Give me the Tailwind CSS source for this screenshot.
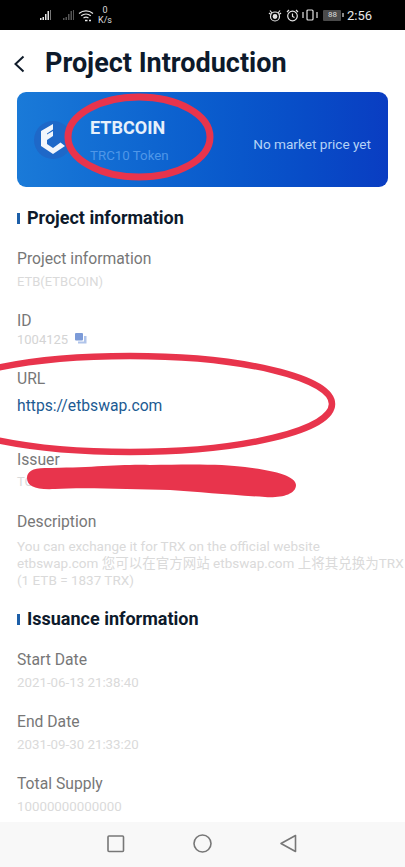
<!DOCTYPE html>
<html lang="en">
<head>
  <meta charset="UTF-8">
  <title>Project Introduction</title>
  <meta name="viewport" content="width=device-width, initial-scale=1" />
  <script src="https://cdn.jsdelivr.net/npm/@tailwindcss/browser@4"></script>
</head>
<body class="bg-white font-['Roboto','Noto_Sans_CJK_SC',sans-serif]">
<div class="relative w-[405px] h-[867px] overflow-hidden flex flex-col">

  <!-- status bar -->
  <div class="h-[30px] shrink-0 bg-black flex items-center justify-between text-white">
    <div class="ml-[40px] flex items-center">
      <svg width="12" height="12" viewBox="0 0 12 12" fill="#e5e5e5"><rect x="0" y="9" width="1.500" height="2"/><rect x="2.500" y="8" width="1.500" height="3"/><rect x="5" y="5" width="1.500" height="6"/><rect x="7.500" y="2" width="1.500" height="9"/><rect x="10" y="1" width="1" height="10" fill="#777"/></svg>
      <svg class="ml-[11px]" width="12" height="12" viewBox="0 0 12 12" fill="#555"><rect x="0" y="9" width="1.500" height="2"/><rect x="2.500" y="8" width="1.500" height="3"/><rect x="5" y="5" width="1.500" height="6"/><rect x="7.500" y="2" width="1.500" height="9"/><rect x="10" y="1" width="1" height="10"/></svg>
      <svg class="ml-[3px]" width="16" height="13" viewBox="0 0 16 13" fill="none" stroke="#e5e5e5" stroke-width="1.200"><path d="M1 4.500C5 1 11 1 15 4.500"/><path d="M3.200 6.800C6 4.500 10 4.500 12.800 6.800"/><path d="M5.500 9C7 8 9 8 10.500 9"/><path d="M7 11.500h2.500M11 11.500h2" stroke-width="1.600"/></svg>
      <div class="ml-[4px] flex flex-col items-center text-[9px] leading-[10px] text-[#ddd]"><span>0</span><span>K/s</span></div>
    </div>
    <div class="mr-[33px] flex items-center">
      <svg width="14" height="13" viewBox="0 0 14 13" fill="none" stroke="#e5e5e5" stroke-width="1.200"><path d="M1 4c1 1 1.500 1 2 1.500M13 4c-1 1-1.500 1-2 1.500M2 1.500l2 2.500M12 1.500l-2 2.500"/><circle cx="7" cy="7.500" r="4.500"/><circle cx="7" cy="7.500" r="1.800" fill="#e5e5e5"/></svg>
      <svg class="ml-[4px]" width="13" height="13" viewBox="0 0 13 13" fill="none" stroke="#e5e5e5" stroke-width="1.200"><circle cx="6.500" cy="7" r="4.800"/><path d="M6.500 4.500V7.500L8.500 8.500M1 3L3 1M12 3L10 1"/></svg>
      <svg class="ml-[3px]" width="16" height="12" viewBox="0 0 16 12" fill="none" stroke="#e5e5e5" stroke-width="1.200"><rect x="5" y="1" width="6" height="10" rx="1"/><path d="M1 3v6M15 3v6"/></svg>
      <div class="ml-[5px] w-[18px] h-[11px] bg-[#4a4a4a] rounded-[1px] flex items-center justify-center text-[8px] leading-none text-[#ddd]">88</div>
      <div class="w-[1.500px] h-[4px] ml-[1px] bg-[#888]"></div>
      <span class="ml-[3px] text-[13px] leading-none text-[#e8e8e8]">2:56</span>
    </div>
  </div>

  <!-- header -->
  <div class="h-[62px] shrink-0 flex items-center pt-[5px]">
    <svg class="ml-[13px]" width="12" height="18" viewBox="0 0 12 18" fill="none" stroke="#0f1b2a" stroke-width="2"><path d="M10.500 1.500L2.500 9L10.500 16.500"/></svg>
    <h1 class="ml-[20px] text-[27px] leading-none font-bold text-[#0d1a2b]">Project Introduction</h1>
  </div>

  <!-- token card -->
  <div class="mx-[17px] h-[95px] shrink-0 rounded-[9px] bg-gradient-to-r from-[#1a7ad8] to-[#0a3dc2] flex items-center">
    <div class="ml-[17px] w-[38px] h-[38px] rounded-full bg-[#1e68c8] flex items-center justify-center">
      <svg width="26" height="31" viewBox="0 0 26 31" fill="#f2f6fc"><path d="M13 0L1 7V22L13 30L25 22L20.500 18.500L13 24L7 20V16L13 12V7L7 10.500V9.500L13 5.500Z"/></svg>
    </div>
    <div class="ml-[18px] flex flex-col pt-[3px]">
      <span class="text-[18px] leading-[20px] font-bold text-[#e6f0fb]">ETBCOIN</span>
      <span class="mt-[10px] text-[13.300px] leading-[16px] text-[#4f97e8]">TRC10 Token</span>
    </div>
    <span class="ml-auto mr-[17px] mt-[10px] text-[13.600px] text-[#b6d3f6]">No market price yet</span>
  </div>

  <!-- project information -->
  <div class="mt-[21px] mx-[17px] flex items-center h-[20px]">
    <div class="w-[3px] h-[11px] bg-[#1d5fa8]"></div>
    <h2 class="ml-[7px] text-[18px] leading-none font-bold text-[#0d1a2b]">Project information</h2>
  </div>

  <div class="mt-[20px] ml-[17px] flex flex-col">
    <div class="flex flex-col">
      <span class="text-[15.700px] leading-[22px] text-[#777]">Project information</span>
      <span class="mt-[4px] text-[13px] leading-[16px] text-[#dadada]">ETB(ETBCOIN)</span>
    </div>
    <div class="mt-[20px] flex flex-col">
      <span class="text-[15.700px] leading-[22px] text-[#777]">ID</span>
      <span class="flex items-center text-[13px] leading-[16px] text-[#d4d4d4]">1004125
        <svg class="ml-[7px] -mt-[3px]" width="12" height="11" viewBox="0 0 12 11"><rect x="0" y="0" width="8" height="7.500" rx="1" fill="#7c9bd8"/><path d="M9 3h2.500v7.500H3V8.500h6Z" fill="#b0c4ea"/></svg>
      </span>
    </div>
    <div class="mt-[20px] flex flex-col">
      <span class="text-[15.700px] leading-[22px] text-[#777]">URL</span>
      <span class="mt-[6px] text-[15.700px] leading-[20px] text-[#1c5a92]">https://etbswap.com</span>
    </div>
    <div class="mt-[33px] flex flex-col">
      <span class="text-[15.700px] leading-[22px] text-[#777]">Issuer</span>
      <span class="mt-[3px] text-[13px] leading-[16px] text-[#dadada]">TC</span>
    </div>
    <div class="mt-[21px] flex flex-col">
      <span class="text-[15.700px] leading-[22px] text-[#777]">Description</span>
      <p class="mt-[5px] w-[388px] whitespace-nowrap text-[13.500px] leading-[17px] text-[#dadada]">You can exchange it for TRX on the official website<br>etbswap.com 您可以在官方网站 etbswap.com 上将其兑换为TRX<br>(1 ETB = 1837 TRX)</p>
    </div>
  </div>

  <!-- issuance information -->
  <div class="mt-[20px] mx-[17px] flex items-center h-[20px]">
    <div class="w-[3px] h-[11px] bg-[#1d5fa8]"></div>
    <h2 class="ml-[7px] text-[18px] leading-none font-bold text-[#0d1a2b]">Issuance information</h2>
  </div>

  <div class="mt-[20px] ml-[17px] flex flex-col gap-[20px]">
    <div class="flex flex-col">
      <span class="text-[15.700px] leading-[22px] text-[#777]">Start Date</span>
      <span class="mt-[4px] text-[13.300px] leading-[16px] text-[#dadada]">2021-06-13 21:38:40</span>
    </div>
    <div class="flex flex-col">
      <span class="text-[15.700px] leading-[22px] text-[#777]">End Date</span>
      <span class="mt-[4px] text-[13.300px] leading-[16px] text-[#dadada]">2031-09-30 21:33:20</span>
    </div>
    <div class="flex flex-col">
      <span class="text-[15.700px] leading-[22px] text-[#777]">Total Supply</span>
      <span class="mt-[4px] text-[13.300px] leading-[16px] text-[#dadada]">10000000000000</span>
    </div>
  </div>

  <!-- nav bar -->
  <div class="absolute left-0 right-0 bottom-0 h-[45px] bg-[#f8f8f8]">
    <svg class="absolute left-0 top-0" width="405" height="45" viewBox="0 0 405 45" fill="none" stroke="#777" stroke-width="1.600">
      <rect x="108" y="14" width="15.500" height="15.500" rx="1"/>
      <circle cx="202.500" cy="21.500" r="8.500"/>
      <path d="M295.500 13.500V29.500L281 21.500Z" stroke-linejoin="round"/>
    </svg>
  </div>

  <!-- red annotations -->
  <svg class="absolute left-0 top-0 pointer-events-none" width="405" height="867" viewBox="0 0 405 867" fill="none">
    <ellipse cx="139" cy="137" rx="71" ry="40" stroke="#e8344c" stroke-width="7"/>
    <ellipse cx="130" cy="404" rx="202" ry="48" stroke="#e8344c" stroke-width="6.500"/>
    <path d="M27 478C27 472 32 468 45 468C90 468 120 464 150 465C190 464 225 464 245 467C270 470 296 475 296 485C296 495 280 498 265 497C230 495 200 492 170 490C130 489 80 487 55 489C35 490 27 486 27 478Z" fill="#e8344c"/>
  </svg>

</div>
</body>
</html>
